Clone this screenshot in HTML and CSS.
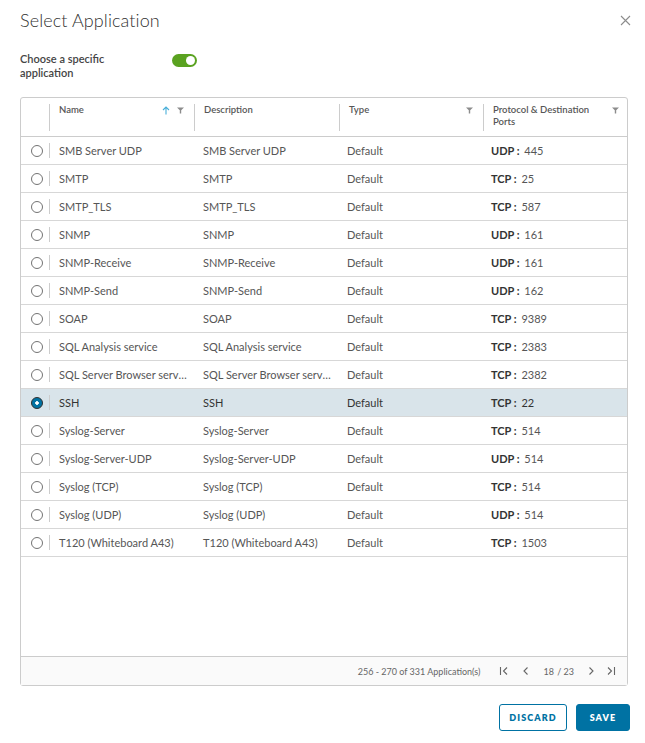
FILE: index.html
```html
<!DOCTYPE html>
<html lang="en">
<head>
    <meta charset="UTF-8">
    <meta name="viewport" content="width=device-width, initial-scale=1.0">
    <title>Select Application</title>
    <link rel="stylesheet" href="styles.css">
</head>
<body>
    <div class="modal">
        <header class="modal-header">
            <h1>Select Application</h1>
            <button class="close" aria-label="Close">
                <svg width="11" height="11" viewBox="0 0 11 11"><path d="M1 1L10 10M10 1L1 10" stroke="#8c8c8c" stroke-width="1.1"/></svg>
            </button>
        </header>

        <div class="toggle-row">
            <label for="specific"><span>Choose a specific application</span></label>
            <span class="toggle on" id="specific"><span class="knob"></span></span>
        </div>

        <div class="datagrid">
            <table>
                <colgroup>
                    <col class="c-sel">
                    <col class="c-name">
                    <col class="c-desc">
                    <col class="c-type">
                    <col class="c-proto">
                </colgroup>
                <thead>
                    <tr>
                        <th></th>
                        <th><div class="th-in">
                            <span>Name</span>
                            <span class="icons">
                                <svg width="8" height="9" viewBox="0 0 8 9"><path d="M4 8.5V1M1 4L4 1L7 4" fill="none" stroke="#49afd9" stroke-width="1.1"/></svg>
                                <svg class="filter" width="7" height="7" viewBox="0 0 7 7"><path d="M0 0.5H7L4.2 3.3V6.5H2.8V3.3Z" fill="#8c8c8c"/></svg>
                            </span>
                        </div></th>
                        <th><div class="th-in"><span>Description</span></div></th>
                        <th><div class="th-in">
                            <span>Type</span>
                            <span class="icons"><svg class="filter" width="7" height="7" viewBox="0 0 7 7"><path d="M0 0.5H7L4.2 3.3V6.5H2.8V3.3Z" fill="#8c8c8c"/></svg></span>
                        </div></th>
                        <th><div class="th-in">
                            <span>Protocol &amp; Destination Ports</span>
                            <span class="icons"><svg class="filter" width="7" height="7" viewBox="0 0 7 7"><path d="M0 0.5H7L4.2 3.3V6.5H2.8V3.3Z" fill="#8c8c8c"/></svg></span>
                        </div></th>
                    </tr>
                </thead>
                <tbody id="rows"></tbody>
            </table>
            <div class="grid-body-fill"></div>
            <footer class="grid-footer">
                <span class="count">256 - 270 of 331 Application(s)</span>
                <nav class="pager">
                    <svg width="10" height="10" viewBox="0 0 10 10"><path d="M1.5 1V9M8 1.5L4.5 5L8 8.5" fill="none" stroke="#666" stroke-width="1.1"/></svg>
                    <svg class="prev" width="10" height="10" viewBox="0 0 10 10"><path d="M6.5 1.5L3 5L6.5 8.5" fill="none" stroke="#666" stroke-width="1.1"/></svg>
                    <span class="pages"><span class="cur">18</span> / 23</span>
                    <svg width="10" height="10" viewBox="0 0 10 10"><path d="M3.5 1.5L7 5L3.5 8.5" fill="none" stroke="#666" stroke-width="1.1"/></svg>
                    <svg width="10" height="10" viewBox="0 0 10 10"><path d="M8.5 1V9M2 1.5L5.5 5L2 8.5" fill="none" stroke="#666" stroke-width="1.1"/></svg>
                </nav>
            </footer>
        </div>

        <div class="actions">
            <button class="btn btn-outline">Discard</button>
            <button class="btn btn-primary">Save</button>
        </div>
    </div>

    <script>
      // Données de la grille
      const apps = [
        ['SMB Server UDP', 'SMB Server UDP', 'UDP', '445'],
        ['SMTP', 'SMTP', 'TCP', '25'],
        ['SMTP_TLS', 'SMTP_TLS', 'TCP', '587'],
        ['SNMP', 'SNMP', 'UDP', '161'],
        ['SNMP-Receive', 'SNMP-Receive', 'UDP', '161'],
        ['SNMP-Send', 'SNMP-Send', 'UDP', '162'],
        ['SOAP', 'SOAP', 'TCP', '9389'],
        ['SQL Analysis service', 'SQL Analysis service', 'TCP', '2383'],
        ['SQL Server Browser service', 'SQL Server Browser service', 'TCP', '2382'],
        ['SSH', 'SSH', 'TCP', '22'],
        ['Syslog-Server', 'Syslog-Server', 'TCP', '514'],
        ['Syslog-Server-UDP', 'Syslog-Server-UDP', 'UDP', '514'],
        ['Syslog (TCP)', 'Syslog (TCP)', 'TCP', '514'],
        ['Syslog (UDP)', 'Syslog (UDP)', 'UDP', '514'],
        ['T120 (Whiteboard A43)', 'T120 (Whiteboard A43)', 'TCP', '1503']
      ];
      const selected = 'SSH';
      const tbody = document.getElementById('rows');

      apps.forEach(([name, desc, proto, port]) => {
        const tr = document.createElement('tr');
        if (name === selected) tr.className = 'selected';
        tr.innerHTML = `
          <td><span class="radio"></span></td>
          <td><div class="name-in">${name}</div></td>
          <td>${desc}</td>
          <td>Default</td>
          <td><b>${proto} :</b> ${port}</td>
        `;
        tbody.appendChild(tr);
      });
    </script>
</body>
</html>
```

FILE: styles.css
```css
/* Base */
body {
  margin: 0;
  font-family: Lato, 'Noto Sans', sans-serif;
  color: #565656;
  background: #fff;
}
.modal {
  width: 645px;
  height: 743px;
  box-sizing: border-box;
  padding: 8px 15px 0 20px;
}
.modal-header {
  display: flex;
  justify-content: space-between;
  align-items: center;
  height: 24px;
}
h1 {
  margin: 0;
  font-size: 18px;
  font-weight: 300;
  color: #313131;
  letter-spacing: 0.1px;
}
.close {
  border: none;
  background: none;
  padding: 0;
  margin-right: -1px;
  display: flex;
}

/* Interrupteur */
.toggle-row {
  display: flex;
  align-items: flex-start;
  margin-top: 20px;
}
.toggle-row label {
  width: 152px;
  font-size: 11px;
  line-height: 14px;
  font-weight: 600;
  color: #454545;
}
.toggle-row label span {
  display: block;
  max-width: 92px;
}
.toggle {
  width: 25px;
  height: 13px;
  border-radius: 7px;
  background: #5aa220;
  margin-top: 2px;
  display: flex;
  align-items: center;
  justify-content: flex-end;
  padding: 0 2px;
  box-sizing: border-box;
}
.knob {
  width: 9px;
  height: 9px;
  border-radius: 50%;
  background: #fff;
}

/* Grille */
.datagrid {
  margin-top: 17px;
  width: 608px;
  height: 589px;
  box-sizing: border-box;
  border: 1px solid #ccc;
  border-radius: 3px;
  display: flex;
  flex-direction: column;
}
table {
  width: 100%;
  table-layout: fixed;
  border-collapse: collapse;
  font-size: 11px;
}
.c-sel { width: 28px; }
.c-name { width: 145px; }
.c-desc { width: 145px; }
.c-type { width: 144px; }
th {
  padding: 0;
  height: 38px;
  vertical-align: top;
  text-align: left;
  border-bottom: 1px solid #ccc;
}
.th-in {
  display: flex;
  justify-content: space-between;
  margin-top: 6px;
  height: 27px;
  border-left: 1px solid #ccc;
  padding: 0 10px 0 9px;
  font-size: 9.5px;
  line-height: 12px;
  font-weight: 600;
  color: #565656;
}
th:last-child .th-in { padding-right: 8px; }
.th-in > span:first-child { max-width: 110px; }
.icons {
  display: flex;
  gap: 7px;
  align-items: flex-start;
  padding-top: 2px;
}
.icons .filter { margin-top: 1px; }
td {
  height: 27px;
  padding: 0 8px;
  border-bottom: 1px solid #d7d7d7;
  white-space: nowrap;
  overflow: hidden;
  text-overflow: ellipsis;
  color: #565656;
}
td:nth-child(3) { padding-left: 9px; }
td:first-child {
  padding: 0 0 0 10px;
  overflow: visible;
}
td:nth-child(2) { padding: 0 6px 0 0; }
.name-in {
  border-left: 1px solid #ccc;
  padding-left: 9px;
  line-height: 15px;
  overflow: hidden;
  text-overflow: ellipsis;
}
td b {
  font-weight: 700;
  color: #333;
  margin-right: 2px;
}
.radio {
  display: block;
  width: 12px;
  height: 12px;
  box-sizing: border-box;
  border: 1px solid #737373;
  border-radius: 50%;
  background: #fff;
}
tr.selected td { background: #d9e4ea; color: #333; }
tr.selected .radio {
  border: 1px solid #313131;
  background: radial-gradient(circle, #fff 0 1.5px, #0072a3 2px);
}
.grid-body-fill { flex: 1; }
.grid-footer {
  height: 28px;
  border-top: 1px solid #ccc;
  background: #fafafa;
  display: flex;
  justify-content: flex-end;
  align-items: center;
  font-size: 9px;
  color: #666;
  padding-right: 11px;
}
.pager {
  display: flex;
  align-items: center;
  gap: 10px;
  margin-left: 19px;
}
.pager .prev { margin-left: 2px; }
.pages { padding: 0 2px; }
.cur { margin-right: 1px; }

/* Boutons */
.actions {
  display: flex;
  justify-content: flex-end;
  gap: 9px;
  margin-top: 18px;
}
.btn {
  height: 27px;
  border-radius: 3px;
  font-family: Lato, sans-serif;
  font-size: 9px;
  font-weight: 800;
  letter-spacing: 1.1px;
  text-transform: uppercase;
  cursor: pointer;
}
.btn-outline {
  width: 68px;
  background: #fff;
  color: #0072a3;
  border: 1px solid #0072a3;
}
.btn-primary {
  width: 54px;
  background: #0072a3;
  color: #fff;
  border: 1px solid #0072a3;
}
```
